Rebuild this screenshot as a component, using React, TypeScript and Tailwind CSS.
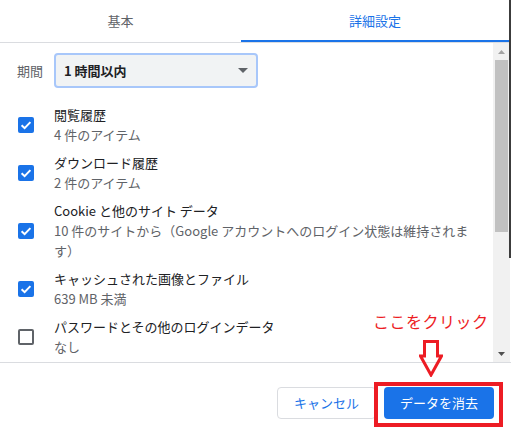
import { ChevronDown } from 'lucide-react';

type Item = { title: string; sub: React.ReactNode; checked: boolean };

const items: Item[] = [
  { title: '閲覧履歴', sub: '4 件のアイテム', checked: true },
  { title: 'ダウンロード履歴', sub: '2 件のアイテム', checked: true },
  {
    title: 'Cookie と他のサイト データ',
    sub: (
      <>
        10 件のサイトから（Google アカウントへのログイン状態は維持されま
        <br />
        す）
      </>
    ),
    checked: true,
  },
  { title: 'キャッシュされた画像とファイル', sub: '639 MB 未満', checked: true },
  { title: 'パスワードとその他のログインデータ', sub: 'なし', checked: false },
];

function Checkbox({ checked }: { checked: boolean }) {
  if (!checked) {
    return <div className="w-4 h-4 shrink-0 rounded-[2px] border-2 border-[#5f6368]" />;
  }
  return (
    <div className="w-4 h-4 shrink-0 rounded-[2px] bg-[#1a73e8] flex items-center justify-center">
      <svg viewBox="0 0 16 16" className="w-4 h-4">
        <path d="M3.6 8.2 6.6 11.1 12.4 5.1" fill="none" stroke="#fff" strokeWidth="2" />
      </svg>
    </div>
  );
}

export default function App() {
  return (
    <div className="relative w-[511px] h-[436px] bg-white overflow-hidden flex flex-col font-['Noto_Sans_CJK_JP','Noto_Sans',sans-serif] text-[13px]">
      {/* Tabs */}
      <div className="flex h-[43px] border-b border-[#dadce0] shrink-0">
        <div className="w-[241px] flex items-center justify-center pt-[2px] border-b-2 border-transparent text-[#5f6368] text-[13px]">
          基本
        </div>
        <div className="flex-1 flex items-center justify-center pt-[2px] border-b-2 border-[#1a73e8] text-[#1a73e8] text-[13px]">
          詳細設定
        </div>
        <div className="w-[2px]" />
      </div>

      {/* Body */}
      <div className="flex h-[320px] border-b border-[#dadce0] shrink-0">
        <div className="flex-1 overflow-hidden">
          <div className="flex items-center pl-[17px] pt-[10px]">
            <span className="w-[37px] text-[#5f6368] leading-[20px]">期間</span>
            <div className="w-[204px] h-[35px] rounded-[4px] border-2 border-[#a8c7fa] bg-[#f1f3f4] flex items-center pl-[8px] pr-[8px]">
              <span className="flex-1 font-bold text-[#202124] leading-[20px]">1 時間以内</span>
              <svg viewBox="0 0 10 5" className="w-[10px] h-[5px]">
                <path d="M0 0h10L5 5z" fill="#5f6368" />
              </svg>
            </div>
          </div>

          <div className="flex flex-col gap-[8px] pt-[17px]">
            {items.map((it) => (
              <div key={it.title} className="flex items-center pl-[18px]">
                <Checkbox checked={it.checked} />
                <div className="ml-[20px] leading-[20px]">
                  <div className="text-[#202124]">{it.title}</div>
                  <div className="text-[#5f6368]">{it.sub}</div>
                </div>
              </div>
            ))}
          </div>
        </div>

        {/* Scrollbar */}
        <div className="w-[17px] bg-[#f1f1f1] flex flex-col items-center">
          <div className="h-[17px] flex items-center justify-center">
            <svg viewBox="0 0 7 4" className="w-[7px] h-[4px]">
              <path d="M0 4h7L3.5 0z" fill="#a3a3a3" />
            </svg>
          </div>
          <div className="w-[13px] h-[172px] bg-[#c1c1c1]" />
          <div className="flex-1" />
          <div className="h-[17px] flex items-center justify-center">
            <svg viewBox="0 0 7 4" className="w-[7px] h-[4px]">
              <path d="M0 0h7L3.5 4z" fill="#505050" />
            </svg>
          </div>
        </div>
        <div className="w-[1px]" />
      </div>

      {/* Footer buttons */}
      <div className="flex justify-end items-start gap-[8px] pt-[24px] pr-[17px]">
        <button className="w-[99px] h-[32px] rounded-[4px] border border-[#dadce0] bg-white text-[#1a73e8]">
          キャンセル
        </button>
        <button className="w-[110px] h-[32px] rounded-[4px] bg-[#1a73e8] text-white">
          データを消去
        </button>
      </div>

      {/* window edge */}
      <div className="absolute right-0 top-0 w-[2px] h-[258px] bg-[#3c3c3c]" />

      {/* Annotation */}
      <div className="absolute left-[373px] top-[311px] text-[16px] leading-[20px] tracking-[0.5px] text-[#ed1c24]">
        ここをクリック
      </div>
      <svg viewBox="0 0 24 37" className="absolute left-[419px] top-[340px] w-[24px] h-[37px]">
        <path d="M5.5 1.5H18.5V16H22.5L12 35L1.5 16H5.5Z" fill="none" stroke="#ed1c24" strokeWidth="3" strokeLinejoin="miter" />
      </svg>
      <div className="absolute left-[374px] top-[382px] w-[129px] h-[45px] border-4 border-[#ed1c24]" />
      <span className="hidden">
        <ChevronDown />
      </span>
    </div>
  );
}
